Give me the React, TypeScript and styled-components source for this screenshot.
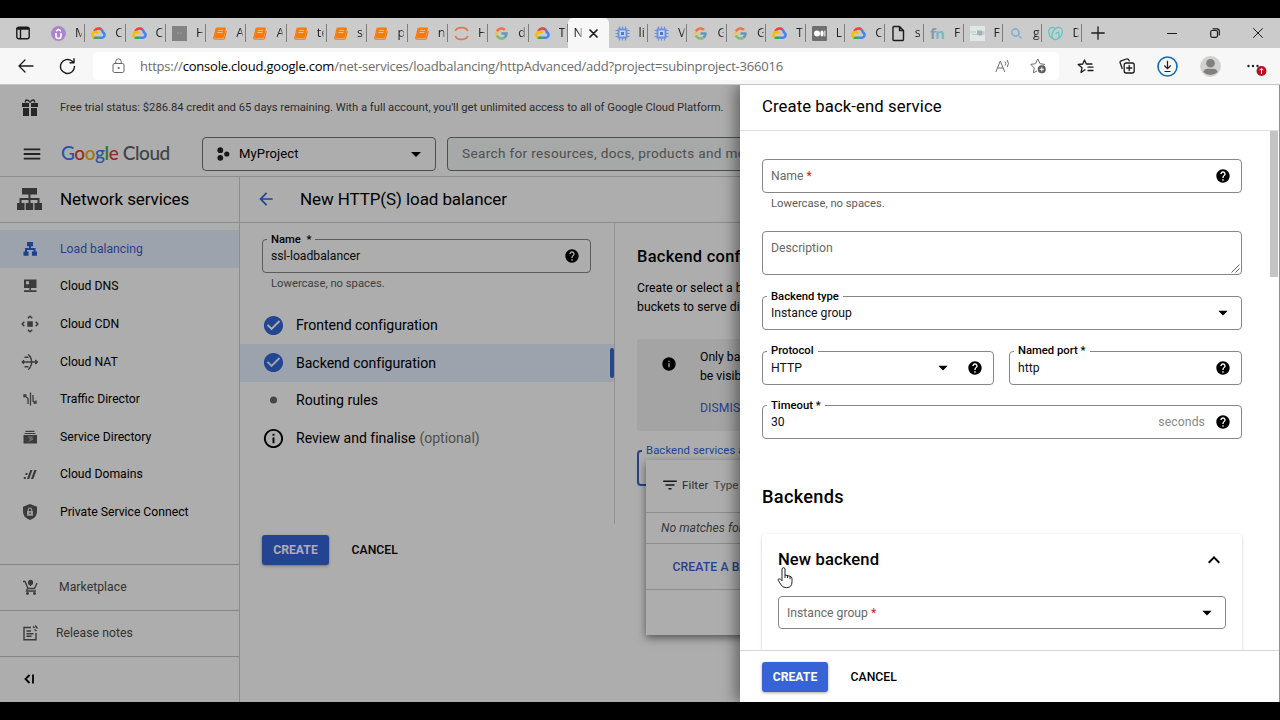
import React from "react";
import styled, { createGlobalStyle, css } from "styled-components";
import {
  MdHelp, MdInfo, MdMenu, MdArrowBack, MdCheckCircle, MdArrowDropDown, MdFilterList, MdInfoOutline, MdExpandLess,
} from "react-icons/md";
import { FcGoogle } from "react-icons/fc";
import { SiGodaddy } from "react-icons/si";

const Global = createGlobalStyle`
  * { box-sizing: border-box; }
  body { margin: 0; background: #000; font-family: Roboto, "Liberation Sans", sans-serif; color: #000; }
  svg { display: block; flex: none; }
`;

const Screen = styled.div`
  width: 1280px;
  height: 720px;
  padding: 18px 0;
  background: #000;
  display: flex;
  flex-direction: column;
  overflow: hidden;
`;

/* ---------- browser chrome ---------- */

const TabStrip = styled.div`
  height: 30px;
  background: #cbcbcb;
  display: flex;
  align-items: stretch;
  flex: none;
`;

const Slot = styled.div<{ $w: number }>`
  width: ${(p) => p.$w}px;
  flex: none;
  display: flex;
  align-items: center;
  justify-content: center;
`;

const Tab = styled.div<{ $w: number }>`
  width: ${(p) => p.$w}px;
  flex: none;
  display: flex;
  align-items: center;
  padding-left: 6px;
  &::after {
    content: "";
    width: 1px;
    height: 18px;
    margin-left: auto;
    background: #7d7d7d;
  }
`;

const TabText = styled.span`
  font: 12.5px/18px "Open Sans", "Noto Sans", sans-serif;
  width: 7px;
  margin-left: 9px;
  overflow: hidden;
  white-space: nowrap;
  color: #222;
  mask-image: linear-gradient(90deg, #000 55%, rgba(0, 0, 0, 0.3));
`;

const ActiveTab = styled.div`
  width: 41px;
  flex: none;
  background: #f7f7f7;
  border-radius: 5px 5px 0 0;
  display: flex;
  align-items: center;
  padding-left: 6px;
  ${TabText} { margin-left: 0; width: 8px; }
  svg { margin-left: 7px; }
`;

const FnMark = styled.span`
  width: 15px;
  font: 700 15px/18px "Open Sans", sans-serif;
  letter-spacing: -1px;
  color: #7fb6c4;
  i { font-style: normal; color: #8b9aa5; }
`;

const Toolbar = styled.div`
  height: 36px;
  background: #f7f7f7;
  display: flex;
  align-items: center;
  flex: none;
`;

const AddressBox = styled.div`
  margin-left: 10px;
  width: 966px;
  height: 28px;
  background: #fff;
  border-radius: 4px;
  display: flex;
  align-items: center;
  margin-right: 5px;
`;

const Url = styled.span`
  flex: 1;
  margin-left: -3px;
  font: 13px/20px "Open Sans", "Noto Sans", sans-serif;
  letter-spacing: -0.21px;
  color: #6b6b6b;
  white-space: nowrap;
  b { font-weight: 400; color: #000; }
`;

const GcpMark = () => (
  <svg width="15" height="15" viewBox="4 4 120 120">
    <path fill="#ea4335" d="M80.6 40.3h.4l-.2-.2 14-14v-.3c-11.8-10.4-28.1-14-43.2-9.5C36.5 20.8 24.9 32.8 20.7 48c.2-.1.5-.2.8-.2 5.2-3.4 11.4-5.4 17.9-5.4 2.2 0 4.3.2 6.4.6.1-.1.2-.1.3-.1 9-9.9 24.2-11.1 34.6-2.6h-.1z" />
    <path fill="#4285f4" d="M108.1 47.8c-2.3-8.5-7.1-16.2-13.8-22.1L80 39.9c6 4.9 9.5 12.3 9.3 20v2.5c16.9 0 16.9 25.2 0 25.2H63.9v20h-.1l.1.2h25.4c14.6.1 27.5-9.3 31.8-23.1 4.3-13.8-1-28.8-13-36.9z" />
    <path fill="#34a853" d="M39 107.9h26.3V87.7H39c-1.9 0-3.7-.4-5.4-1.1l-15.2 14.6v.2c6 4.3 13.2 6.6 20.7 6.6z" />
    <path fill="#fbbc05" d="M40.2 41.9c-14.9.1-28.1 9.3-32.9 22.8-4.8 13.6 0 28.5 11.8 37.3l15.6-14.9c-8.6-3.7-10.6-14.5-4-20.8 6.6-6.4 17.8-4.4 21.7 3.8L68 55.2C61.4 46.9 51.1 42 40.2 42.1z" />
  </svg>
);

const UdemyMark = () => (
  <svg width="15" height="15" viewBox="0 0 15 15">
    <circle cx="7.5" cy="7.5" r="7.4" fill="#ac83cf" />
    <path d="M5 7v3a2.5 2.5 0 0 0 5 0V7M5 5.2l2.5-1.8L10 5.2" fill="none" stroke="#fff" strokeWidth="1.6" />
  </svg>
);

const SquareMark = () => (
  <svg width="15" height="15" viewBox="0 0 15 15">
    <rect width="15" height="15" fill="#838383" />
    <path d="M5 7h2M8 7h2" stroke="#9d9d9d" />
  </svg>
);

const BookMark = () => (
  <svg width="15" height="15" viewBox="0 0 15 15">
    <path d="M4.6 1.5h8.6q1 0 .7 1l-2 8.5q-.3 1-1.3 1H2.4z" fill="#f57c0a" />
    <path d="M4.300 2L2.200 10.600q-1.200 2.600.8 2.600h8q1.200 0 1.500-1L14.300 5" fill="none" stroke="#f57c0a" strokeWidth="1.300" />
    <path d="M6 4.400h5M5.400 6.500h5" stroke="#ffc88f" strokeWidth=".9" />
  </svg>
);

const JupyterMark = () => (
  <svg width="15" height="15" viewBox="0 0 15 15" fill="none" stroke="#e0784a" strokeWidth="1.8">
    <path d="M1.3 5C3 .4 12 .4 13.7 5M1.3 10c1.7 4.6 10.700 4.600 12.400 0" />
  </svg>
);

const ChipMark = () => (
  <svg width="15" height="15" viewBox="0 0 15 15" fill="none">
    <path d="M4.500 .5v14M7.500 .5v14M10.500 .5v14M.5 4.500h14M.5 7.500h14M.5 10.500h14" stroke="#6f92dd" strokeWidth="1.200" />
    <rect x="2.500" y="2.500" width="10" height="10" fill="#6f92dd" />
    <rect x="4.500" y="4.500" width="6" height="6" fill="#c9d6f3" />
    <rect x="6" y="6" width="3" height="3" fill="#4a76d4" />
  </svg>
);

const MediumMark = () => (
  <svg width="15" height="15" viewBox="0 0 15 15">
    <rect width="15" height="15" rx="1" fill="#6e6e6e" />
    <circle cx="5" cy="7.500" r="3" fill="#fff" />
    <ellipse cx="10" cy="7.500" rx="1.600" ry="3" fill="#fff" />
    <path d="M12.900 4.600v5.800" stroke="#fff" />
  </svg>
);

const FileMark = () => (
  <svg width="15" height="17" viewBox="0 0 15 17" fill="none" stroke="#1c1c1c" strokeWidth="1.400" strokeLinejoin="round">
    <path d="M3 1.500h5.500l4 4v9q0 1-1 1H3q-1 0-1-1v-12q0-1 1-1zM8.500 1.500v4h4" />
  </svg>
);

const PlugMark = () => (
  <svg width="15" height="15" viewBox="0 0 15 15">
    <rect width="15" height="15" fill="#e3e6e6" />
    <path d="M0 6h6M2 8.500h5" stroke="#a9c9c9" />
    <path d="M7 4.500h5v5H9q-2 0-2-2z" fill="#9fb3b3" />
    <path d="M12 6h2.500M12 8h2.500" stroke="#9fb3b3" />
  </svg>
);

const SearchMark = () => (
  <svg width="15" height="15" viewBox="0 0 15 15" fill="none" stroke="#83aed0" strokeWidth="1.600">
    <circle cx="6.500" cy="6.500" r="3.600" />
    <path d="M9.200 9.200l3.300 3.300" />
  </svg>
);

const FadedG = styled(FcGoogle)` opacity: 0.6; `;

const TABS_LEFT: [React.ReactNode, string][] = [
  [<UdemyMark />, "M"], [<GcpMark />, "C"], [<GcpMark />, "C"], [<SquareMark />, "H"], [<BookMark />, "A"],
  [<BookMark />, "A"], [<BookMark />, "te"], [<BookMark />, "se"], [<BookMark />, "p"], [<BookMark />, "n"],
  [<JupyterMark />, "H"], [<FadedG size={15} />, "d"], [<GcpMark />, "T"],
];
const TABS_RIGHT: [React.ReactNode, string][] = [
  [<ChipMark />, "li"], [<ChipMark />, "V"], [<FadedG size={15} />, "G"], [<FadedG size={15} />, "G"],
  [<GcpMark />, "T"], [<MediumMark />, "L"], [<GcpMark />, "C"], [<FileMark />, "s"],
  [<FnMark><i>f</i>n</FnMark>, "F"], [<PlugMark />, "F"], [<SearchMark />, "g"],
  [<SiGodaddy size={15} color="#5fc9c0" />, "D"],
];

const Line = styled.svg.attrs({ fill: "none", stroke: "#1b1b1b", strokeLinecap: "round", strokeLinejoin: "round" })``;

const Browser = () => (
  <>
    <TabStrip>
      <Slot $w={45}>
        <Line width="14" height="14" viewBox="0 0 14 14" strokeWidth="1.400">
          <rect x=".8" y="1.200" width="12.400" height="11.600" rx="2" />
          <path d="M1.500 2.800h11" strokeWidth="2" />
          <path d="M4.500 3.500v9" />
        </Line>
      </Slot>
      {TABS_LEFT.map(([icon, text], i) => (
        <Tab key={i} $w={i === 12 ? 39 : 40.3}>{icon}<TabText>{text}</TabText></Tab>
      ))}
      <ActiveTab>
        <TabText>N</TabText>
        <Line width="9" height="9" viewBox="0 0 9 9" strokeWidth="1.700"><path d="M1 1l7 7M8 1L1 8" /></Line>
      </ActiveTab>
      {TABS_RIGHT.map(([icon, text], i) => (
        <Tab key={i} $w={39.45}>{icon}<TabText>{text}</TabText></Tab>
      ))}
      <Slot $w={32}>
        <Line width="14" height="14" viewBox="0 0 14 14" strokeWidth="1.300"><path d="M7 .8v12.400M.8 7h12.400" /></Line>
      </Slot>
      <Slot $w={37} />
      <Slot $w={43}>
        <Line width="10" height="10" viewBox="0 0 10 10"><path d="M.5 5.500h9" /></Line>
      </Slot>
      <Slot $w={43}>
        <Line width="10" height="10" viewBox="0 0 10 10" strokeWidth="1.200">
          <rect x=".7" y="2.500" width="6.800" height="6.800" rx="1.500" />
          <path d="M3 .8h4q2.300 0 2.300 2.300V7" />
        </Line>
      </Slot>
      <Slot $w={43}>
        <Line width="10" height="10" viewBox="0 0 10 10"><path d="M.5.5l9 9M9.500.5l-9 9" /></Line>
      </Slot>
    </TabStrip>
    <Toolbar>
      <Slot $w={52}>
        <Line width="16" height="14" viewBox="0 0 16 14" strokeWidth="1.300"><path d="M15 7H1M7 1L1 7l6 6" /></Line>
      </Slot>
      <Slot $w={31}>
        <Line width="17" height="17" viewBox="0 0 17 17" strokeWidth="1.400">
          <path d="M15.500 8.500A7 7 0 1 1 12.900 3l2 1.600M15 .8v4h-4" />
        </Line>
      </Slot>
      <AddressBox>
        <Slot $w={50}>
          <Line width="13" height="16" viewBox="0 0 13 16">
            <rect x="1" y="5.500" width="11" height="9" rx="1.500" stroke="#666" />
            <path d="M3.800 5.500V3.500a2.700 2.700 0 0 1 5.400 0v2" stroke="#666" />
            <circle cx="6.500" cy="10" r=".6" stroke="#666" fill="#666" />
          </Line>
        </Slot>
        <Url>https://<b>console.cloud.google.com</b>/net-services/loadbalancing/httpAdvanced/add?project=subinproject-366016</Url>
        <Slot $w={32}>
          <svg width="15" height="14" viewBox="0 0 15 14" fill="none" stroke="#6d6d6d">
            <path d="M.8 13L5.300 2l4.500 11M2.500 9h5.700M10 2.500q1.500 2 0 4M12.200 1q2.500 3.500 0 7" />
          </svg>
        </Slot>
        <Slot $w={41}>
          <svg width="17" height="16" viewBox="0 0 17 16" fill="none" stroke="#6d6d6d" strokeLinejoin="round">
            <path d="M7 13l-3.600 1.800.8-4.900L.8 6.400l4.700-.7L7.800 1l2.300 4.700 4.600.7-1.400 1.400" />
            <circle cx="11.800" cy="11.300" r="4" fill="#5d5d5d" stroke="none" />
            <path d="M11.800 9.200v4.200M9.700 11.300h4.200" stroke="#fff" />
          </svg>
        </Slot>
      </AddressBox>
      <Slot $w={42}>
        <Line width="17" height="15" viewBox="0 0 17 15" strokeWidth="1.300">
          <path d="M8 10.800L4 13.500l1-4.700L1.200 5.500l4.600-.5L7.500 1l1.800 4H15M11 8.200h5M11 11.500h5" />
        </Line>
      </Slot>
      <Slot $w={42}>
        <Line width="16" height="16" viewBox="0 0 16 16" strokeWidth="1.300">
          <rect x="5.200" y="5" width="10" height="10" rx="2" />
          <path d="M10.200 7.500v5M7.700 10h5M3.200 10.500L1.200 5q-.6-1.600 1-2.200L7.500 1q1.700-.5 2.300 1l.3.800" />
        </Line>
      </Slot>
      <Slot $w={38}>
        <svg width="21" height="21" viewBox="0 0 21 21" fill="none">
          <circle cx="10.500" cy="10.500" r="9.500" stroke="#0f6cb0" strokeWidth="1.600" />
          <path d="M10.500 4.800v7.500M7.300 9.500l3.200 3.200 3.200-3.200M7.500 15.500h6" stroke="#222" strokeWidth="1.200" />
        </svg>
      </Slot>
      <Slot $w={49}>
        <svg width="21" height="21" viewBox="0 0 21 21">
          <circle cx="10.500" cy="10.500" r="10.400" fill="#d3d0ce" />
          <circle cx="10.500" cy="7.300" r="4.300" fill="#80807e" />
          <path d="M3.300 16q1.200-3.200 4-3.200h6.400q2.800 0 4 3.200a10 10 0 0 1-14.400 0z" fill="#80807e" />
        </svg>
      </Slot>
      <Slot $w={42}>
        <svg width="22" height="20" viewBox="0 0 22 20">
          <circle cx="3.500" cy="10" r="1.200" fill="#222" /><circle cx="8" cy="10" r="1.200" fill="#222" /><circle cx="12.500" cy="10" r="1.200" fill="#222" />
          <circle cx="16.500" cy="15" r="5" fill="#b3151c" />
          <path d="M16.500 18V12.500M14.500 14.300l2-2 2 2" stroke="#fff" fill="none" />
        </svg>
      </Slot>
    </Toolbar>
  </>
);

/* ---------- console ---------- */

const Viewport = styled.div`
  position: relative;
  flex: 1;
  background: #fff;
  border-top: 1px solid #c4c4c4;
  display: flex;
  flex-direction: column;
  overflow: hidden;
`;

const TrialBar = styled.div`
  height: 46px;
  display: flex;
  align-items: center;
  padding: 0 0 1px 22px;
  font-size: 11.25px;
  letter-spacing: -0.02px;
  color: #3f3f3f;
  white-space: nowrap;
  svg { margin-right: 22px; }
`;

const ConsoleBar = styled.div`
  height: 46px;
  display: flex;
  align-items: center;
  padding: 0 0 0 21px;
  border-bottom: 1px solid #d0d0d0;
  flex: none;
`;

const Logo = styled.div`
  width: 141px;
  margin-left: 18px;
  padding-bottom: 2px;
  font: 500 19px/24px Lato, sans-serif;
  letter-spacing: -0.43px;
  color: #5f6368;
  white-space: nowrap;
`;
const Hue = styled.span<{ $c: string }>` color: ${(p) => p.$c}; `;

const ProjectPicker = styled.div`
  width: 234px;
  height: 34px;
  border: 1px solid #747474;
  border-radius: 4px;
  display: flex;
  align-items: center;
  padding: 0 7px 0 13px;
  font-size: 13.1px;
  letter-spacing: 0.08px;
  span { flex: 1; margin-left: 9px; }
`;

const SearchBox = styled.div`
  margin-left: 11px;
  flex: 1;
  height: 34px;
  border: 1px solid #747474;
  border-radius: 4px;
  background: #f6f8f8;
  padding-left: 14px;
  font-size: 13.6px;
  line-height: 31px;
  letter-spacing: 0.33px;
  color: #757575;
  white-space: nowrap;
`;

const Columns = styled.div`
  flex: 1;
  display: flex;
  min-height: 0;
`;

const Sidebar = styled.div`
  width: 240px;
  flex: none;
  border-right: 1px solid #d0d0d0;
  display: flex;
  flex-direction: column;
`;

const SectionTitle = styled.div`
  height: 46px;
  flex: none;
  border-bottom: 1px solid #d0d0d0;
  display: flex;
  align-items: center;
  padding: 0 0 2px 16px;
  font-size: 17px;
  letter-spacing: -0.08px;
  gap: 17px;
`;

const Nav = styled.div`
  flex: 1;
  padding-top: 7px;
`;

const NavItem = styled.div<{ $active?: boolean }>`
  height: 37.6px;
  display: flex;
  align-items: center;
  padding-left: 21px;
  gap: 21px;
  font-size: 12.2px;
  ${(p) => p.$active && css` background: #e8f0fe; color: #3f5fcd; `}
`;

const SideLink = styled.div<{ $gap: number }>`
  height: 46px;
  flex: none;
  border-top: 1px solid #c4c4c4;
  display: flex;
  align-items: center;
  padding: 0 0 2px 21px;
  gap: ${(p) => p.$gap}px;
  font-size: 12.2px;
  letter-spacing: 0.05px;
  color: #4d4d4d;
`;

const Main = styled.div`
  flex: 1;
  display: flex;
  flex-direction: column;
  min-width: 0;
`;

const MainTitle = styled(SectionTitle)`
  padding-left: 16px;
  gap: 24px;
  letter-spacing: -0.1px;
`;

const MainBody = styled.div`
  display: flex;
  flex: 1;
  align-items: flex-start;
`;

const Steps = styled.div`
  width: 375px;
  height: 301px;
  border-right: 1px solid #d8d8d8;
  flex: none;
`;

const StepsForm = styled.div` padding: 16px 23px 0 22px; `;

const Step = styled.div<{ $active?: boolean }>`
  height: 37.6px;
  display: flex;
  align-items: center;
  padding-left: 22px;
  font-size: 14.1px;
  letter-spacing: -0.04px;
  ${(p) => p.$active && css`
    background: #e8f0fe;
    &::after { content: ""; margin: 0 0 0 auto; width: 4px; height: 30px; border-radius: 2px; background: #3367d6; }
  `}
  em { font-style: normal; color: #757575; margin-left: 4px; }
`;
const StepIcon = styled.div`
  width: 23px;
  margin-right: 11px;
  display: flex;
  justify-content: center;
`;

const StepList = styled.div` margin-top: 15.5px; `;

const LeftPane = styled.div` flex: none; `;

const Actions = styled.div<{ $top: number }>`
  display: flex;
  align-items: center;
  padding: ${(p) => p.$top}px 0 0 22px;
  gap: 22.5px;
`;

const Primary = styled.div<{ $w: number }>`
  width: ${(p) => p.$w}px;
  height: 30px;
  border-radius: 3px;
  background: #3664d6;
  color: #fff;
  font-weight: 700;
  font-size: 12.2px;
  line-height: 30px;
  text-align: center;
  box-shadow: 0 1px 3px rgba(0, 0, 0, 0.35);
`;
const Plain = styled.div`
  font-weight: 500;
  font-size: 12.2px;
  line-height: 30px;
  letter-spacing: 0.05px;
`;

const RightPane = styled.div`
  flex: 1;
  padding: 24px 0 0 22px;
  min-width: 0;
  white-space: nowrap;
`;

const PaneHeading = styled.div`
  font: 500 16.4px/20px Roboto, sans-serif;
  letter-spacing: 0.3px;
`;
const PaneText = styled.div`
  margin-top: 12px;
  font-size: 12.2px;
  line-height: 18.8px;
  letter-spacing: 0.05px;
`;

const Notice = styled.div`
  margin-top: 22px;
  height: 92px;
  background: #f2f2f2;
  border-radius: 3px;
  display: flex;
  padding: 9px 0 0 24px;
  gap: 23px;
  font-size: 12.2px;
  line-height: 19px;
  > svg { margin-top: 8px; }
`;
const LinkText = styled.div`
  color: #3f5fcd;
  font-size: 12.2px;
  letter-spacing: 0.1px;
`;
const NoticeLink = styled(LinkText)` margin-top: 13px; `;

/* ---------- form field ---------- */

const FieldBox = styled.div<{ $h: number; $focus?: boolean }>`
  position: relative;
  height: ${(p) => p.$h}px;
  border: ${(p) => (p.$focus ? "2px solid #2f62d9" : "1px solid #868686")};
  border-radius: 4px;
  display: flex;
  align-items: center;
  padding: 0 10px 0 8px;
  font-size: 12.2px;
`;
const FieldLabel = styled.span<{ $focus?: boolean }>`
  position: absolute;
  left: ${(p) => (p.$focus ? 3 : 4)}px;
  top: -8.5px;
  padding: 0 4px;
  background: #fff;
  font: ${(p) => (p.$focus ? 400 : 500)} 11.25px/15px Roboto, sans-serif;
  letter-spacing: ${(p) => (p.$focus ? 0.12 : 0)}px;
  color: ${(p) => (p.$focus ? "#2f62d9" : "#000")};
  white-space: pre;
`;
const Value = styled.span<{ $hint?: boolean; $top?: boolean }>`
  flex: 1;
  color: ${(p) => (p.$hint ? "#6a6a6a" : "#111")};
  ${(p) => p.$top && css` align-self: flex-start; padding-top: 9px; `}
`;
const Star = styled.span` color: #c5221f; `;
const Unit = styled.span` color: #8a8a8a; margin-right: 10px; letter-spacing: 0.1px; `;
const FieldIcons = styled.span`
  display: flex;
  align-items: center;
  gap: 16px;
`;
const Helper = styled.div`
  padding: 3px 0 0 9px;
  font-size: 11.25px;
  line-height: 15px;
  color: #5c5c5c;
`;

const Help = () => <MdHelp size={16} color="#000" />;
const Caret = () => (
  <svg width="16" height="16" viewBox="0 0 16 16"><path d="M3.300 5.700h9.400L8 10.500z" fill="#000" /></svg>
);

type FieldProps = {
  label?: string; value?: string; hint?: string; required?: boolean; unit?: string;
  caret?: boolean; help?: boolean; height?: number;
};
const Field = ({ label, value, hint, required, unit, caret, help, height = 34 }: FieldProps) => (
  <FieldBox $h={height}>
    {label && <FieldLabel>{label}</FieldLabel>}
    <Value $hint={!!hint} $top={height > 40}>{hint ?? value}{required && <Star> *</Star>}</Value>
    {unit && <Unit>{unit}</Unit>}
    <FieldIcons>{caret && <Caret />}{help && <Help />}</FieldIcons>
    {height > 40 && <Grip />}
  </FieldBox>
);

const GripSvg = styled.svg` position: absolute; right: 1px; bottom: 1px; `;
const Grip = () => (
  <GripSvg width="9" height="9" viewBox="0 0 9 9" stroke="#555" strokeWidth=".9"><path d="M.5 8.500l8-8M4.500 8.500l4-4" /></GripSvg>
);

/* ---------- dropdown ---------- */

const SelectWrap = styled.div`
  margin-top: 19px;
  position: relative;
`;
const Menu = styled.div`
  position: absolute;
  left: 9px;
  top: 10px;
  width: 300px;
  height: 175px;
  background: #fff;
  box-shadow: 0 3px 8px rgba(0, 0, 0, 0.5);
`;
const MenuFilter = styled.div`
  height: 53px;
  display: flex;
  align-items: center;
  padding: 0 0 1px 15px;
  gap: 3px;
  font-size: 11.6px;
  letter-spacing: 0.1px;
  color: #444;
  border-bottom: 1px solid #d0d0d0;
  span + span { margin-left: 2px; color: #666; }
`;
const MenuEmpty = styled.div`
  height: 31px;
  border-bottom: 1px solid #d0d0d0;
  padding-left: 15px;
  font: italic 12.2px/30px Roboto, sans-serif;
  color: #555;
`;
const MenuAction = styled(LinkText)`
  height: 46px;
  border-bottom: 1px solid #d0d0d0;
  padding-left: 26.5px;
  font-weight: 500;
  line-height: 46px;
`;

/* ---------- drawer ---------- */

const Scrim = styled.div`
  position: absolute;
  inset: 0;
  background: rgba(0, 0, 0, 0.32);
`;
const Drawer = styled.div`
  position: absolute;
  top: 0;
  right: 0;
  bottom: 0;
  width: 540px;
  background: #fff;
  border-right: 1px solid #8e8e8e;
  box-shadow: -4px 0 14px rgba(0, 0, 0, 0.45);
  display: flex;
  flex-direction: column;
`;
const DrawerTitle = styled.div`
  height: 46px;
  flex: none;
  border-bottom: 1px solid #dedede;
  padding-left: 22px;
  font-size: 16.7px;
  letter-spacing: 0.09px;
  line-height: 44px;
`;
const DrawerBody = styled.div`
  flex: 1;
  min-height: 0;
  overflow: hidden;
  display: flex;
  justify-content: space-between;
`;
const Thumb = styled.div`
  width: 8px;
  height: 146px;
  margin-right: 1px;
  background: #c4c4c4;
  flex: none;
`;
const Form = styled.div`
  width: 502px;
  padding: 28px 0 0 22px;
`;
const Row = styled.div<{ $top: number; $split?: boolean }>`
  margin-top: ${(p) => p.$top}px;
  display: grid;
  grid-template-columns: ${(p) => (p.$split ? "232px 1fr" : "1fr")};
  gap: 15px;
`;
const FormHeading = styled.div`
  margin-top: 47px;
  font: 500 18.2px/22px Roboto, sans-serif;
  letter-spacing: 0.3px;
`;
const Card = styled.div`
  margin-top: 26px;
  height: 180px;
  border-radius: 3px;
  box-shadow: 0 1px 3px rgba(0, 0, 0, 0.22);
  padding: 13px 16px 0;
`;
const CardHead = styled.div`
  display: flex;
  justify-content: space-between;
  align-items: center;
  height: 26px;
  margin-bottom: 23px;
  font: 500 16.6px/22px Roboto, sans-serif;
  letter-spacing: 0.1px;
`;
const DrawerFooter = styled.div`
  height: 52px;
  flex: none;
  border-top: 1px solid #d6d6d6;
`;

const Pointer = styled.svg`
  position: absolute;
  left: 777px;
  top: 481px;
`;

/* ---------- icons ---------- */

const Gift = () => (
  <svg width="16" height="18" viewBox="0 0 16 18" fill="#3a3a3a">
    <path d="M0 4h7v4H0zM9 4h7v4H9zM1 9h6v8H1zM9 9h6v8H9z" />
    <path d="M8 3.500C6 0 3 .5 3.500 3.500M8 3.500C10 0 13 .5 12.500 3.500" fill="none" stroke="#3a3a3a" strokeWidth="1.500" />
  </svg>
);
const ProjectDots = () => (
  <svg width="14" height="14" viewBox="0 0 14 14" fill="#222">
    <circle cx="4.300" cy="3.200" r="2.900" /><circle cx="4.300" cy="10.800" r="2.900" /><circle cx="10.800" cy="7" r="2.600" />
  </svg>
);
const NetworkIcon = () => (
  <svg width="27" height="24" viewBox="0 0 27 24" fill="#505050">
    <path d="M6 1h15v6.500H6zM1 16h7.500v7H1zM9.700 16h7.500v7H9.700zM18.500 16H26v7h-7.500z" />
    <path d="M13.500 7v9M4.500 16v-4h18v4" fill="none" stroke="#505050" strokeWidth="2" />
  </svg>
);

const Icon = styled.svg.attrs({ width: 18, height: 18, viewBox: "0 0 18 18" })``;
const INK = "#575757";
const NAV: { text: string; icon: React.ReactNode }[] = [
  {
    text: "Load balancing",
    icon: (
      <Icon fill="#2f5fd0">
        <path d="M6 2h6v4.200H6zM2.500 11.500h5v4.300h-5zM11 11.500h5v4.300h-5z" />
        <path d="M9 5v4M5 12.500V9h8.500v3.500" fill="none" stroke="#2f5fd0" strokeWidth="2" />
      </Icon>
    ),
  },
  {
    text: "Cloud DNS",
    icon: <Icon fill={INK}><path fillRule="evenodd" d="M3 2.500h12.500v8.500H3zM5 4.300v3h3v-3zM8.400 11h1.600v2.500H8.400zM3 13.300h12.500V15H3z" /></Icon>,
  },
  {
    text: "Cloud CDN",
    icon: (
      <Icon fill={INK}>
        <path d="M6.300 6.300h5.500v5.500H6.300z" />
        <path d="M6.800 3.300L9 1.200l2.200 2.100M6.800 14.700L9 16.800l2.200-2.100M3.300 6.800L1.200 9l2.100 2.200M14.700 6.800L16.800 9l-2.100 2.200" fill="none" stroke={INK} strokeWidth="1.500" />
      </Icon>
    ),
  },
  {
    text: "Cloud NAT",
    icon: (
      <Icon fill="none" stroke={INK} strokeWidth="1.400">
        <path d="M1.500 9h14.500M14.300 7l2 2-2 2M3 7.300L1.300 9 3 10.700M3.500 4.200h4M3.500 13.800h4M7 1.500l1.500 1q4.500 6.500 0 13L7 16.500" />
      </Icon>
    ),
  },
  {
    text: "Traffic Director",
    icon: (
      <Icon fill="none" stroke={INK} strokeWidth="1.300">
        <path d="M3 5l4 3.500V14M3 7.500V5h2.500M9.500 2.500v13M12 5v6l3.500 2M15 10.500v2.500h-2.500" />
      </Icon>
    ),
  },
  {
    text: "Service Directory",
    icon: (
      <Icon fill={INK}>
        <path d="M4.500 2.800h9v1.100h-9zM3.500 4.900h11V6h-11zM2.500 7h13.500v8.500H2.500z" />
        <path d="M7 9h4.500L8.500 11h3.500L7.500 13.500" fill="none" stroke="#bdbdbd" strokeWidth=".9" />
      </Icon>
    ),
  },
  {
    text: "Cloud Domains",
    icon: <Icon fill={INK}><path d="M9.300 5h2.200L8.200 14H6zM13.300 5h2.400L12.300 14H10zM4.500 8h2v2h-2zM2.800 12h2v2h-2z" /></Icon>,
  },
  {
    text: "Private Service Connect",
    icon: (
      <Icon fill={INK}>
        <path d="M9 1l7 2.700v5q0 5.800-7 8.300-7-2.500-7-8.300v-5z" />
        <rect x="6" y="8" width="6" height="4.700" fill="#e6e6e6" />
        <path d="M7.300 8V6.700a1.700 1.700 0 0 1 3.400 0V8" fill="none" stroke="#e6e6e6" strokeWidth="1.100" />
        <circle cx="9" cy="10.300" r=".8" />
      </Icon>
    ),
  },
];

const Console = () => (
  <>
    <TrialBar><Gift />Free trial status: $286.84 credit and 65 days remaining. With a full account, you'll get unlimited access to all of Google Cloud Platform.</TrialBar>
    <ConsoleBar>
      <MdMenu size={22} color="#333" />
      <Logo>
        <Hue $c="#3b7df0">G</Hue><Hue $c="#e0403a">o</Hue><Hue $c="#f0b400">o</Hue><Hue $c="#3b7df0">g</Hue><Hue $c="#34a853">l</Hue><Hue $c="#e0403a">e</Hue> Cloud
      </Logo>
      <ProjectPicker><ProjectDots /><span>MyProject</span><MdArrowDropDown size={24} /></ProjectPicker>
      <SearchBox>Search for resources, docs, products and more</SearchBox>
    </ConsoleBar>
    <Columns>
      <Sidebar>
        <SectionTitle><NetworkIcon />Network services</SectionTitle>
        <Nav>
          {NAV.map((n, i) => <NavItem key={n.text} $active={i === 0}>{n.icon}{n.text}</NavItem>)}
        </Nav>
        <SideLink $gap={20}>
          <Icon fill="none" stroke={INK} strokeWidth="1.300">
            <path d="M2 3.500h2l3 7h6.500L16 5M6.500 10.500L5.500 13H15" />
            <circle cx="9.500" cy="4.500" r="2" fill={INK} /><path d="M9.500 5v3" />
            <circle cx="6.500" cy="15.500" r=".8" fill={INK} /><circle cx="13.500" cy="15.500" r=".8" fill={INK} />
          </Icon>
          Marketplace
        </SideLink>
        <SideLink $gap={17}>
          <Icon fill="none" stroke={INK} strokeWidth="1.400">
            <path d="M10 3.500H3v12.200h12V9M5.500 7h4.500M5.500 9.700h7M5.500 12.300h5M12 2.500l1.500 1.500M14 1.500l2.500 3M13.500 5.500l2 1.500" />
          </Icon>
          Release notes
        </SideLink>
        <SideLink $gap={0}>
          <Icon fill="none" stroke="#000" strokeWidth="1.800"><path d="M8.500 5L4.500 9l4 4M12 4.500v9" /></Icon>
        </SideLink>
      </Sidebar>
      <Main>
        <MainTitle><MdArrowBack size={20} color="#3367d6" />New HTTP(S) load balancer</MainTitle>
        <MainBody>
          <LeftPane>
            <Steps>
              <StepsForm>
                <Field label="Name  *" value="ssl-loadbalancer" help />
                <Helper>Lowercase, no spaces.</Helper>
              </StepsForm>
              <StepList>
                <Step><StepIcon><MdCheckCircle size={23} color="#3367d6" /></StepIcon>Frontend configuration</Step>
                <Step $active><StepIcon><MdCheckCircle size={23} color="#3367d6" /></StepIcon>Backend configuration</Step>
                <Step><StepIcon><svg width="8" height="8"><circle cx="3.500" cy="4" r="3.500" fill="#666" /></svg></StepIcon>Routing rules</Step>
                <Step><StepIcon><MdInfoOutline size={23} /></StepIcon>Review and finalise<em>(optional)</em></Step>
              </StepList>
            </Steps>
            <Actions $top={11}><Primary $w={67}>CREATE</Primary><Plain>CANCEL</Plain></Actions>
          </LeftPane>
          <RightPane>
            <PaneHeading>Backend configuration</PaneHeading>
            <PaneText>Create or select a backend service<br />buckets to serve dictated content</PaneText>
            <Notice>
              <MdInfo size={16} />
              <div>Only backends<br />be visible here<NoticeLink>DISMISS</NoticeLink></div>
            </Notice>
            <SelectWrap>
              <FieldBox $h={36} $focus><FieldLabel $focus>Backend services and buckets</FieldLabel></FieldBox>
              <Menu>
                <MenuFilter><MdFilterList size={18} color="#222" /><span>Filter</span><span>Type to filter</span></MenuFilter>
                <MenuEmpty>No matches for filter</MenuEmpty>
                <MenuAction>CREATE A BACKEND SERVICE</MenuAction>
              </Menu>
            </SelectWrap>
          </RightPane>
        </MainBody>
      </Main>
    </Columns>
  </>
);

const CreateDrawer = () => (
  <Drawer>
    <DrawerTitle>Create back-end service</DrawerTitle>
    <DrawerBody>
      <Form>
        <Field hint="Name" required help />
        <Helper>Lowercase, no spaces.</Helper>
        <Row $top={20}><Field hint="Description" height={44} /></Row>
        <Row $top={21}><Field label="Backend type" value="Instance group" caret /></Row>
        <Row $top={20.5} $split>
          <Field label="Protocol" value="HTTP" caret help />
          <Field label="Named port *" value="http" help />
        </Row>
        <Row $top={20.5}><Field label="Timeout *" value="30" unit="seconds" help /></Row>
        <FormHeading>Backends</FormHeading>
        <Card>
          <CardHead>New backend<MdExpandLess size={24} /></CardHead>
          <Field hint="Instance group" required caret height={33} />
        </Card>
      </Form>
      <Thumb />
    </DrawerBody>
    <DrawerFooter><Actions $top={11}><Primary $w={66}>CREATE</Primary><Plain>CANCEL</Plain></Actions></DrawerFooter>
  </Drawer>
);

export default function App() {
  return (
    <Screen>
      <Global />
      <Browser />
      <Viewport>
        <Console />
        <Scrim />
        <CreateDrawer />
        <Pointer width="16" height="23" viewBox="0 0 16 23">
          <path d="M5 14V3.200a1.500 1.500 0 0 1 3 0V9l5 1.200q2 .5 2 2.500v3q0 6-5.500 6-4 0-5.500-3L1.300 14.500q-.8-1.700 1-1.700 1.500 0 2.700 2z" fill="#fff" stroke="#222" />
          <path d="M8 9v3M10.500 9.600V12M13 10.500V13" stroke="#222" />
        </Pointer>
      </Viewport>
    </Screen>
  );
}
